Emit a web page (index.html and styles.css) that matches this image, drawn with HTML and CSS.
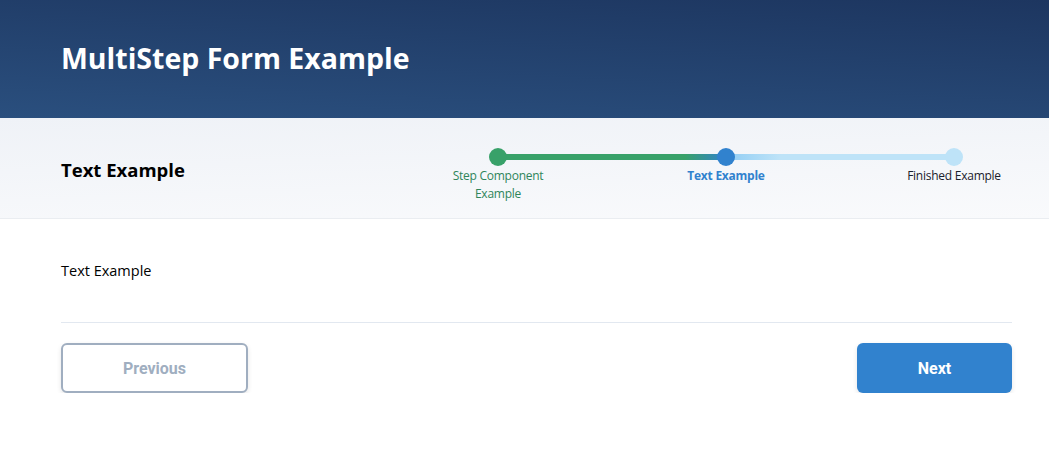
FILE: index.html
```html
<!DOCTYPE html>
<html>
<head>
<meta charset="utf-8">
<link rel="stylesheet" href="styles.css">
</head>
<body>
<header class="header">
  <h1 class="header-title">MultiStep Form Example</h1>
</header>
<section class="steps-bar">
  <h2 class="steps-title">Text Example</h2>
  <div class="stepper">
    <div class="step step-done">
      <span class="dot"></span>
      <span class="label">Step Component Example</span>
    </div>
    <div class="step step-active">
      <span class="dot"></span>
      <span class="label">Text Example</span>
    </div>
    <div class="step step-todo">
      <span class="dot"></span>
      <span class="label">Finished Example</span>
    </div>
  </div>
</section>
<main class="content">
  <p class="content-text">Text Example</p>
  <div class="actions">
    <button class="btn btn-prev">Previous</button>
    <button class="btn btn-next">Next</button>
  </div>
</main>
</body>
</html>
```

FILE: styles.css
```css
* { box-sizing: border-box; }
body {
  margin: 0;
  font-family: "Open Sans", "Noto Sans", sans-serif;
  background: #fff;
  color: #000;
}
.header {
  height: 118px;
  display: flex;
  align-items: center;
  padding: 0 37px 2px 61px;
  background: linear-gradient(183deg, #1d3660 0%, #2a4f7e 100%);
}
.header-title {
  margin: 0;
  color: #fff;
  font-size: 28.5px;
  font-weight: 700;
  line-height: 36px;
}
.steps-bar {
  display: flex;
  justify-content: space-between;
  align-items: flex-start;
  padding: 30px 37px 15px 61px;
  background: linear-gradient(178deg, #eff2f7 0%, #f9fafc 100%);
  border-bottom: 1px solid #eaedf1;
}
.steps-title {
  margin: 10px 0 0;
  font-size: 18.5px;
  font-weight: 700;
  line-height: 24px;
  color: #000;
}
.stepper {
  position: relative;
  display: flex;
  gap: 112px;
}
.stepper::before {
  content: "";
  position: absolute;
  left: 58px;
  right: 58px;
  top: 6px;
  height: 6px;
  background: linear-gradient(90deg, #38a169 0%, #38a169 41%, #3182ce 50%, #90cdf4 50%, #bee3f8 62%, #bee3f8 100%);
}
.step {
  position: relative;
  width: 116px;
  display: flex;
  flex-direction: column;
  align-items: center;
  text-align: center;
}
.dot {
  width: 18px;
  height: 18px;
  border-radius: 50%;
}
.label {
  margin-top: 1px;
  font-size: 12px;
  line-height: 18px;
  letter-spacing: -0.25px;
}
.step-done .dot { background: #38a169; }
.step-done .label { color: #2f855a; }
.step-active .dot { background: #3182ce; }
.step-active .label { color: #3182ce; font-weight: 700; }
.step-todo .dot { background: #bee3f8; }
.step-todo .label { color: #1a202c; }
.content {
  padding: 42px 37px 0 61px;
}
.content-text {
  margin: 0 0 41px;
  font-size: 14.5px;
  line-height: 20px;
}
.actions {
  display: flex;
  justify-content: space-between;
  border-top: 1px solid #e2e8f0;
  padding-top: 20px;
}
.btn {
  height: 50px;
  border-radius: 6px;
  font-family: Roboto, "Liberation Sans", sans-serif;
  font-size: 16px;
  font-weight: 700;
  cursor: pointer;
  box-shadow: 0 2px 5px rgba(0, 0, 0, 0.1);
}
.btn-prev {
  width: 187px;
  background: #fff;
  border: 2px solid #a0aec0;
  color: #a0aec0;
}
.btn-next {
  width: 155px;
  background: #3182ce;
  border: none;
  color: #fff;
}
```
